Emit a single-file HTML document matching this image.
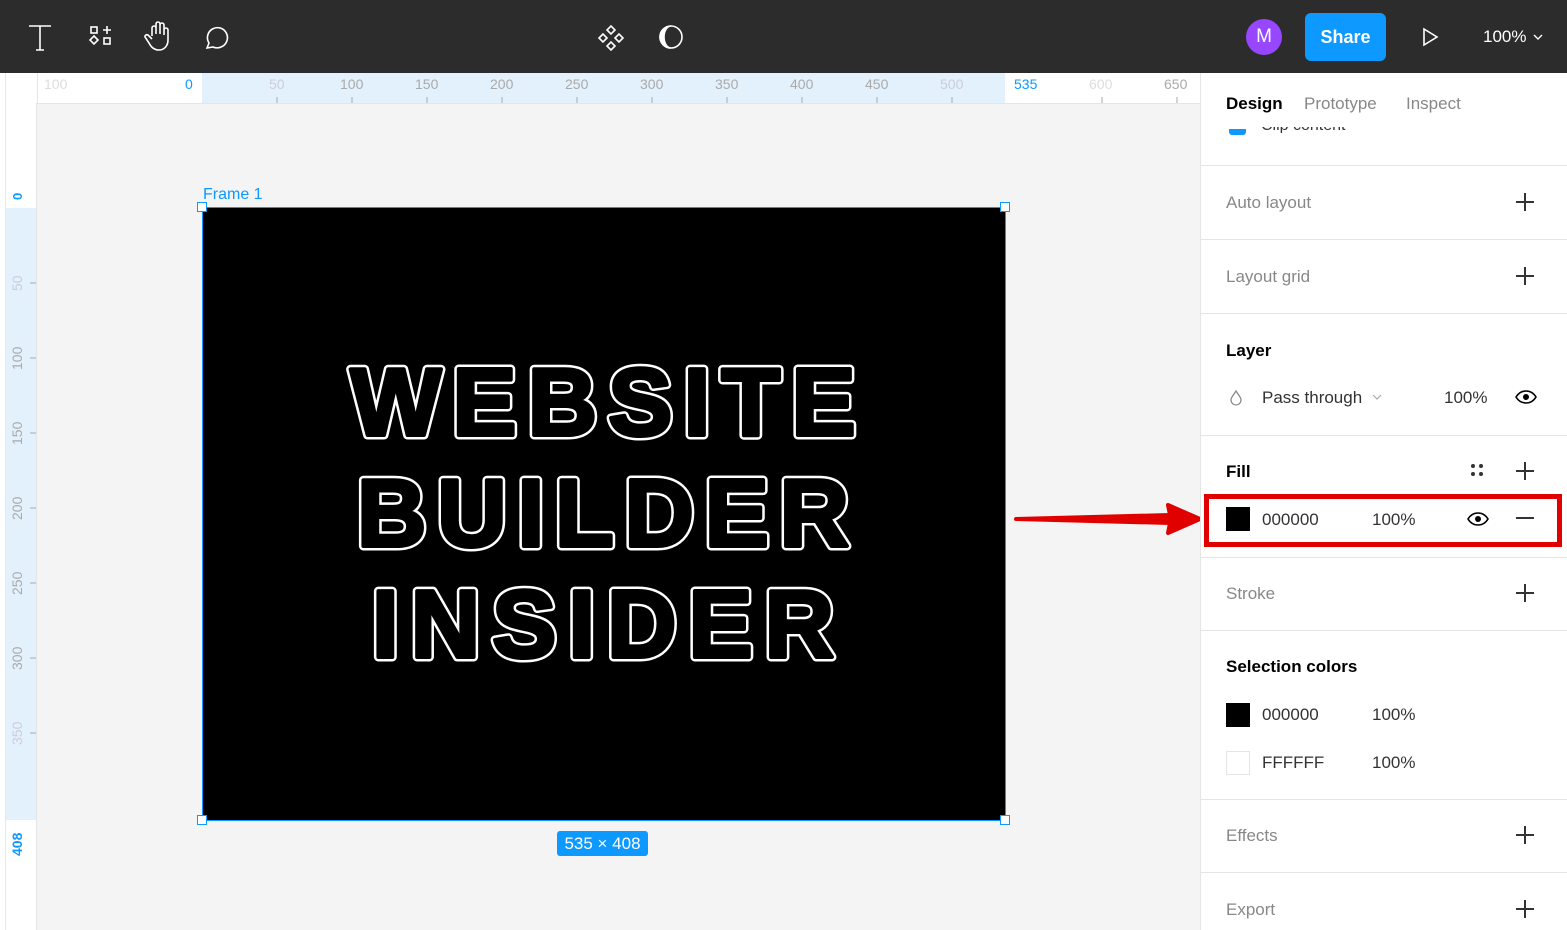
<!DOCTYPE html>
<html><head><meta charset="utf-8"><style>
*{margin:0;padding:0;box-sizing:border-box}
html,body{width:1567px;height:930px;overflow:hidden}
body{background:#f4f4f4;font-family:"Liberation Sans",sans-serif;position:relative}
.abs{position:absolute}
.top{left:0;top:0;width:1567px;height:73px;background:#2c2c2c}
.panel{left:1200px;top:73px;width:367px;height:857px;background:#fff;border-left:1px solid #e5e5e5}
.sec{position:absolute;left:0;width:367px;border-top:1px solid #e5e5e5}
.t{position:absolute;font-size:17px;color:#333}
.g{color:#888}
.plus{position:absolute;width:18px;height:18px}
.plus:before,.plus:after{content:"";position:absolute;background:#333}
.plus:before{left:0;top:8px;width:18px;height:1.5px}
.plus:after{left:8px;top:0;width:1.5px;height:18px}
.rl{font-size:14px;color:#aaa;position:absolute}
</style></head><body>
<div class="abs top"></div>
<svg class="abs" style="left:0;top:0" width="700" height="73" fill="none" stroke="#fff" stroke-width="1.6">
<path d="M29 26h22M40 26v24M36 50h8"/>
<rect x="91" y="27" width="6" height="6"/><path d="M103 30h8M107 26v8"/><path d="M94 36l4 4-4 4-4-4z"/><rect x="104" y="38" width="6" height="6"/>
<path d="M152 36v-8a2 2 0 014 0v6M156 34v-10a2 2 0 014 0v10M160 34v-9a2 2 0 014 0v10M164 35v-5a2 2 0 014 0v10c0 6-4 10-9 10s-8-3-10-7l-4-6a2 2 0 013-2l4 4"/>
<path d="M207 48l2-5a10 10 0 1112 4a10 10 0 01-8 0z"/>
<path d="M611 26l4 4-4 4-4-4zM603 34l4 4-4 4-4-4zM619 34l4 4-4 4-4-4zM611 42l4 4-4 4-4-4z"/>
<circle cx="671" cy="37" r="11"/><path d="M671 26a11 11 0 000 22a7 11 0 010-22z" fill="#fff"/>
</svg>
<div class="abs" style="left:1246px;top:19px;width:36px;height:36px;border-radius:50%;background:#9747ff;color:#fff;font-size:19px;text-align:center;line-height:36px">M</div>
<div class="abs" style="left:1305px;top:13px;width:81px;height:48px;border-radius:6px;background:#0d99ff;color:#fff;font-size:18px;font-weight:bold;text-align:center;line-height:48px">Share</div>
<svg class="abs" style="left:1420px;top:26px" width="20" height="22" fill="none" stroke="#fff" stroke-width="1.6"><path d="M4 3l13 8-13 8z"/></svg>
<div class="abs" style="left:1483px;top:27px;color:#fff;font-size:17px">100%</div>
<svg class="abs" style="left:1532px;top:33px" width="12" height="8" fill="none" stroke="#fff" stroke-width="1.4"><path d="M2 2l4 4 4-4"/></svg>

<div class="abs" style="left:0;top:73px;width:1200px;height:31px;background:#fff;border-bottom:1px solid #e5e5e5"></div>
<div class="abs" style="left:202px;top:73px;width:803px;height:30px;background:#e3f1fd"></div>
<div class="abs" style="left:0;top:73px;width:6px;height:857px;background:#fff;border-right:1px solid #e8e8e8"></div>
<div class="abs" style="left:6px;top:103px;width:31px;height:827px;background:#fff;border-right:1px solid #e5e5e5"></div>
<div class="abs" style="left:6px;top:208px;width:30px;height:612px;background:#e3f1fd"></div>
<div class="abs" style="left:37px;top:73px;width:1px;height:31px;background:#e5e5e5"></div>
<div class="rl" style="left:44px;top:76px;color:#ddd">100</div>
<div class="rl" style="left:185px;top:76px;color:#0d99ff">0</div>
<div class="rl" style="left:269px;top:76px;color:#ccd">50</div>
<div class="rl" style="left:340px;top:76px">100</div>
<div class="rl" style="left:415px;top:76px">150</div>
<div class="rl" style="left:490px;top:76px">200</div>
<div class="rl" style="left:565px;top:76px">250</div>
<div class="rl" style="left:640px;top:76px">300</div>
<div class="rl" style="left:715px;top:76px">350</div>
<div class="rl" style="left:790px;top:76px">400</div>
<div class="rl" style="left:865px;top:76px">450</div>
<div class="rl" style="left:940px;top:76px;color:#ccd">500</div>
<div class="rl" style="left:1014px;top:76px;color:#0d99ff">535</div>
<div class="rl" style="left:1089px;top:76px;color:#ddd">600</div>
<div class="rl" style="left:1164px;top:76px">650</div>
<svg class="abs" style="left:0;top:73px" width="1200" height="857">
<g stroke="#aaa" stroke-width="1">
<path d="M277 24v6M352 24v6M427 24v6M502 24v6M577 24v6M652 24v6M727 24v6M802 24v6M877 24v6M952 24v6M1102 24v6M1177 24v6"/>
<path d="M30 210h6M30 285h6M30 360h6M30 435h6M30 510h6M30 585h6M30 660h6"/>
</g>
<g font-family="Liberation Sans" font-size="14" fill="#aaa">
<text transform="translate(22,127) rotate(-90)" fill="#0d99ff" font-weight="bold" font-size="13">0</text>
<text transform="translate(22,218) rotate(-90)" fill="#ccd">50</text>
<text transform="translate(22,297) rotate(-90)">100</text>
<text transform="translate(22,372) rotate(-90)">150</text>
<text transform="translate(22,447) rotate(-90)">200</text>
<text transform="translate(22,522) rotate(-90)">250</text>
<text transform="translate(22,597) rotate(-90)">300</text>
<text transform="translate(22,672) rotate(-90)" fill="#ccd">350</text>
<text transform="translate(22,783) rotate(-90)" fill="#0d99ff" font-weight="bold">408</text>
</g>
</svg>

<div class="abs" style="left:203px;top:186px;color:#0d99ff;font-size:16px">Frame 1</div>
<div class="abs" style="left:202px;top:207px;width:804px;height:614px;background:#000;border:1.5px solid #0d99ff"></div>
<svg class="abs" style="left:202px;top:207px" width="804" height="614" font-family="Liberation Sans" font-weight="bold" font-size="96" text-anchor="middle">
<g stroke="#fff" stroke-width="9" stroke-linejoin="round" stroke-linecap="round" fill="#fff">
<text x="401" y="228" textLength="505" lengthAdjust="spacing">WEBSITE</text>
<text x="401" y="339" textLength="492" lengthAdjust="spacing">BUILDER</text>
<text x="401" y="450" textLength="462" lengthAdjust="spacing">INSIDER</text>
</g>
<g stroke="#000" stroke-width="4" stroke-linejoin="round" stroke-linecap="round" fill="#000">
<text x="401" y="228" textLength="505" lengthAdjust="spacing">WEBSITE</text>
<text x="401" y="339" textLength="492" lengthAdjust="spacing">BUILDER</text>
<text x="401" y="450" textLength="462" lengthAdjust="spacing">INSIDER</text>
</g>
</svg>
<div class="abs" style="left:197px;top:202px;width:10px;height:10px;background:#fff;border:1.5px solid #0d99ff"></div>
<div class="abs" style="left:1000px;top:202px;width:10px;height:10px;background:#fff;border:1.5px solid #0d99ff"></div>
<div class="abs" style="left:197px;top:815px;width:10px;height:10px;background:#fff;border:1.5px solid #0d99ff"></div>
<div class="abs" style="left:1000px;top:815px;width:10px;height:10px;background:#fff;border:1.5px solid #0d99ff"></div>
<div class="abs" style="left:557px;top:831px;width:91px;height:25px;background:#0d99ff;color:#fff;border-radius:3px;font-size:17px;text-align:center;line-height:25px">535 × 408</div>

<svg class="abs" style="left:1010px;top:495px" width="200" height="50"><path d="M6 24L160 20L158 10L190 24L158 38L160 28z" fill="#e00000" stroke="#e00000" stroke-width="4" stroke-linejoin="round"/></svg>

<div class="abs panel">
<div class="t" style="left:25px;top:21px;color:#000;font-weight:bold">Design</div>
<div class="t g" style="left:103px;top:21px">Prototype</div>
<div class="t g" style="left:205px;top:21px">Inspect</div>
<div class="abs" style="left:28px;top:56px;width:17px;height:6px;background:#0d99ff;border-radius:0 0 3px 3px"></div>
<div class="abs" style="left:60px;top:54px;width:95px;height:6px;overflow:hidden"><div style="margin-top:-10px;font-size:16px;color:#333">Clip content</div></div>
<div class="sec" style="top:92px;height:74px"><div class="t g" style="left:25px;top:27px">Auto layout</div><div class="plus" style="left:315px;top:27px"></div></div>
<div class="sec" style="top:166px;height:74px"><div class="t g" style="left:25px;top:27px">Layout grid</div><div class="plus" style="left:315px;top:27px"></div></div>
<div class="sec" style="top:240px;height:122px">
<div class="t" style="left:25px;top:27px;color:#000;font-weight:bold">Layer</div>
<svg class="abs" style="left:28px;top:75px" width="14" height="18" fill="none" stroke="#888" stroke-width="1.3"><path d="M7 2l4 6a5 5 0 11-8 0z"/></svg>
<div class="t" style="left:61px;top:74px">Pass through</div>
<svg class="abs" style="left:171px;top:80px" width="10" height="7" fill="none" stroke="#aaa" stroke-width="1.2"><path d="M1 1l4 4 4-4"/></svg>
<div class="t" style="left:243px;top:74px">100%</div>
<svg class="abs" style="left:314px;top:76px" width="22" height="14"><path d="M1 7c3-5 7-6 10-6s7 1 10 6c-3 5-7 6-10 6s-7-1-10-6z" fill="none" stroke="#000" stroke-width="1.6"/><circle cx="11" cy="7" r="3" fill="#000"/></svg>
</div>
<div class="sec" style="top:362px;height:122px">
<div class="t" style="left:25px;top:26px;color:#000;font-weight:bold">Fill</div>
<svg class="abs" style="left:269px;top:27px" width="14" height="14" fill="#333"><circle cx="3" cy="3" r="2"/><circle cx="11" cy="3" r="2"/><circle cx="3" cy="11" r="2"/><circle cx="11" cy="11" r="2"/></svg>
<div class="plus" style="left:315px;top:26px"></div>
</div>
<div class="abs" style="left:3px;top:421px;width:358px;height:53px;border:5px solid #e00000"></div>
<div class="abs" style="left:25px;top:434px;width:24px;height:24px;background:#000"></div>
<div class="t" style="left:61px;top:437px">000000</div>
<div class="t" style="left:171px;top:437px">100%</div>
<svg class="abs" style="left:266px;top:439px" width="22" height="14"><path d="M1 7c3-5 7-6 10-6s7 1 10 6c-3 5-7 6-10 6s-7-1-10-6z" fill="none" stroke="#000" stroke-width="1.6"/><circle cx="11" cy="7" r="3" fill="#000"/></svg>
<div class="abs" style="left:315px;top:444px;width:18px;height:1.5px;background:#333"></div>
<div class="sec" style="top:484px;height:74px"><div class="t g" style="left:25px;top:26px">Stroke</div><div class="plus" style="left:315px;top:26px"></div></div>
<div class="sec" style="top:557px;height:170px">
<div class="t" style="left:25px;top:26px;color:#000;font-weight:bold">Selection colors</div>
<div class="abs" style="left:25px;top:72px;width:24px;height:24px;background:#000"></div>
<div class="t" style="left:61px;top:74px">000000</div><div class="t" style="left:171px;top:74px">100%</div>
<div class="abs" style="left:25px;top:120px;width:24px;height:24px;background:#fff;border:1px solid #e5e5e5"></div>
<div class="t" style="left:61px;top:122px">FFFFFF</div><div class="t" style="left:171px;top:122px">100%</div>
</div>
<div class="sec" style="top:726px;height:74px"><div class="t g" style="left:25px;top:26px">Effects</div><div class="plus" style="left:315px;top:26px"></div></div>
<div class="sec" style="top:799px;height:74px"><div class="t g" style="left:25px;top:27px">Export</div><div class="plus" style="left:315px;top:27px"></div></div>
</div>
</body></html>
